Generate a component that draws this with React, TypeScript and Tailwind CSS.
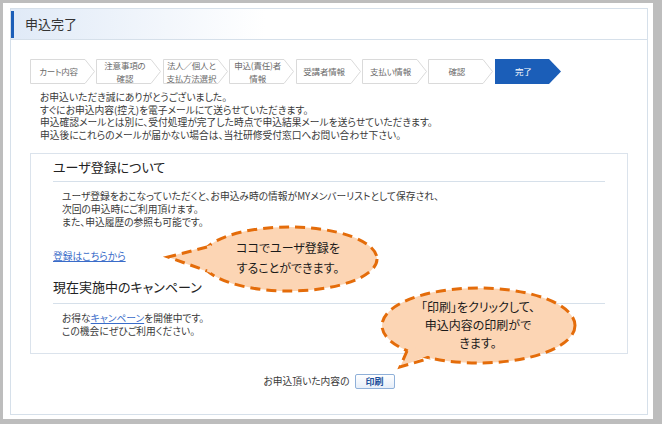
import React from 'react';

const steps: { lines: string[]; active?: boolean }[] = [
  { lines: ['カート内容'] },
  { lines: ['注意事項の', '確認'] },
  { lines: ['法人／個人と', '支払方法選択'] },
  { lines: ['申込(責任)者', '情報'] },
  { lines: ['受講者情報'] },
  { lines: ['支払い情報'] },
  { lines: ['確認'] },
  { lines: ['完了'], active: true },
];

function Step({ lines, active }: { lines: string[]; active?: boolean }) {
  return (
    <div className="relative h-[25px] w-[66.4px] shrink-0">
      <svg className="absolute left-0 top-0" width="66" height="25" viewBox="0 0 66 25">
        {active ? (
          <polygon points="0,0 54,0 66,12.5 54,25 0,25" fill="#1b5eb8" />
        ) : (
          <polygon points="0.5,0.5 55,0.5 64.5,12.5 55,24.5 0.5,24.5" fill="#fff" stroke="#dadada" />
        )}
      </svg>
      <div
        className={`relative flex h-full w-[57px] flex-col items-center justify-center whitespace-nowrap text-[8.5px] leading-[13px] tracking-[-0.2px] ${
          active ? 'text-white' : 'text-[#6a6a6a]'
        }`}
      >
        {lines.map((l) => (
          <span key={l}>{l}</span>
        ))}
      </div>
    </div>
  );
}

export default function App() {
  return (
    <div className="relative h-[424px] w-[662px] bg-[#bdbdbd] pb-[5px] pl-[3px] pr-[9px] pt-[3px] font-['Noto_Sans_CJK_JP',sans-serif] text-[#3a3a3a] [font-feature-settings:'palt']">
      <div className="h-full bg-white pb-[4px] pl-[7px] pr-[5px] pt-[5px]">
        <div className="h-full border border-[#d6e0ea]">
          {/* header */}
          <div className="flex h-[31px] items-center border-b border-[#d6e0ea] bg-gradient-to-r from-[#e0eaf7] via-white via-40% to-white">
            <div className="h-[27px] w-[3px] bg-[#1b5eb8]" />
            <h1 className="ml-[11px] text-[13px] leading-[16px] text-[#333]">申込完了</h1>
          </div>

          <div className="px-[19px]">
            {/* step bar */}
            <div className="mt-[19px] flex">
              {steps.map((s, i) => (
                <Step key={i} lines={s.lines} active={s.active} />
              ))}
            </div>

            <div className="mt-[7px] pl-[10px] text-[9.75px] leading-[12.5px]">
              <p>お申込いただき誠にありがとうございました。</p>
              <p>すぐにお申込内容(控え)を電子メールにて送らせていただきます。</p>
              <p>申込確認メールとは別に、受付処理が完了した時点で申込結果メールを送らせていただきます。</p>
              <p>申込後にこれらのメールが届かない場合は、当社研修受付窓口へお問い合わせ下さい。</p>
            </div>

            {/* user registration box */}
            <div className="mt-[12px] border border-[#dbe3ec] px-[22px] pb-[15px] pt-[5px]">
              <h2 className="border-b border-[#d6e0ea] pb-[6px] text-[13px] leading-[16px] text-[#222]">
                ユーザ登録について
              </h2>
              <div className="mt-[8px] pl-[9px] text-[9.75px] leading-[13px]">
                <p>ユーザ登録をおこなっていただくと、お申込み時の情報がMYメンバーリストとして保存され、</p>
                <p>次回の申込時にご利用頂けます。</p>
                <p>また、申込履歴の参照も可能です。</p>
              </div>
              <a className="mt-[21px] block text-[9.75px] leading-[13px] text-[#3a6cc9] underline">登録はこちらから</a>

              <h2 className="mt-[16px] border-b border-[#d6e0ea] pb-[8px] text-[13px] leading-[16px] text-[#222]">
                現在実施中のキャンペーン
              </h2>
              <div className="mt-[8px] pl-[9px] text-[9.75px] leading-[13px]">
                <p>
                  お得な<a className="text-[#3a6cc9] underline">キャンペーン</a>を開催中です。
                </p>
                <p>この機会にぜひご利用ください。</p>
              </div>
            </div>

            {/* print row */}
            <div className="mt-[20px] flex items-center justify-center gap-[5px] text-[9.75px]">
              <span>お申込頂いた内容の</span>
              <button className="flex h-[15px] w-[40px] items-center justify-center rounded-[2px] border border-[#8fb0d9] bg-gradient-to-b from-white to-[#e6eef9] text-[9px] font-bold leading-none text-[#1d4f9c]">
                印刷
              </button>
            </div>
          </div>
        </div>
      </div>

      {/* callouts */}
      <svg className="pointer-events-none absolute left-0 top-0" width="662" height="424" viewBox="0 0 662 424">
        <g fill="#FCD5B4" stroke="#E46C0A" strokeWidth="3" strokeDasharray="10 6">
          <ellipse cx="289" cy="259" rx="88" ry="32" />
          <polygon points="211,245 168,257 211,273" stroke="none" />
          <path d="M207,247 L168,257 L207,271" fill="none" />

          <ellipse cx="478.5" cy="325.5" rx="96.5" ry="37.5" />
          <polygon points="410,346 400,367 432,354" stroke="none" />
          <path d="M407,351 L400,367 L430,358" fill="none" />
        </g>
      </svg>
      <div className="absolute left-[200px] top-[238px] w-[176px] text-center text-[12px] leading-[20px] text-[#1a1a1a]">
        ココでユーザ登録を
        <br />
        することができます。
      </div>
      <div className="absolute left-[388px] top-[298px] w-[180px] text-center text-[12px] leading-[18px] text-[#1a1a1a]">
        「印刷」をクリックして、
        <br />
        申込内容の印刷がで
        <br />
        きます。
      </div>
    </div>
  );
}
